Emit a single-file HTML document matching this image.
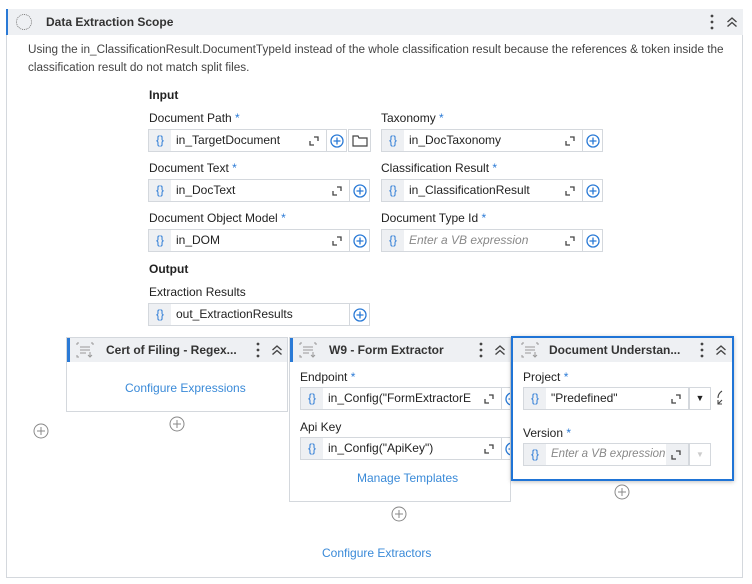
<!DOCTYPE html>
<html><head><meta charset="utf-8"><style>
*{box-sizing:border-box;margin:0;padding:0}
body{width:752px;height:584px;background:#fff;font-family:"Liberation Sans",sans-serif;font-size:12px;color:#222;position:relative;overflow:hidden}
.a{position:absolute}
.lbl{position:absolute;font-size:12px;color:#222;white-space:nowrap}
.lbl b{color:#2a7ad6;font-weight:normal}
.box{position:absolute;height:23px;border:1px solid #d4d8dd;background:#fff;display:flex;white-space:nowrap;overflow:hidden}
.br{width:22px;background:#eef0f3;color:#2a7ad6;text-align:center;line-height:21px;font-size:12px;flex:none}
.v{flex:1;line-height:21px;padding-left:5px;overflow:hidden;font-size:12px}
.v.ph{font-style:italic;color:#888}
.ex{width:22px;flex:none;position:relative}
.ex svg{position:absolute;left:5px;top:6px}
.pl{width:20px;flex:none;border-left:1px solid #d4d8dd;position:relative}
.pl svg{position:absolute;left:3px;top:4px}
.circ{position:absolute}
.card{position:absolute;border:1px solid #d4d8dd;background:#fff}
.hd{position:absolute;left:0;right:0;top:0;height:24px;background:#eef0f3;border-left:3px solid #2a7ad6}
.hd .t{position:absolute;left:36px;top:5px;font-weight:bold;font-size:12px;white-space:nowrap;color:#333}
.link{position:absolute;color:#3a8ad8;font-size:12px;white-space:nowrap}
</style></head><body>
<svg width="0" height="0" style="position:absolute">
<defs>
<symbol id="ex" viewBox="0 0 10 10"><path d="M1 5v4h4M5 1h4v4" fill="none" stroke="#444" stroke-width="1.3"/></symbol>
<symbol id="pl" viewBox="0 0 14 14"><circle cx="7" cy="7" r="6" fill="none" stroke="#2a7ad6" stroke-width="1.3"/><path d="M7 3.5v7M3.5 7h7" stroke="#2a7ad6" stroke-width="1.3"/></symbol>
<symbol id="gp" viewBox="0 0 16 16"><circle cx="8" cy="8" r="7" fill="#fff" stroke="#888" stroke-width="1"/><path d="M8 4v8M4 8h8" stroke="#888" stroke-width="1"/></symbol>
<symbol id="dots" viewBox="0 0 4 16"><circle cx="2" cy="2" r="1.4" fill="#444"/><circle cx="2" cy="8" r="1.4" fill="#444"/><circle cx="2" cy="14" r="1.4" fill="#444"/></symbol>
<symbol id="chev" viewBox="0 0 12 12"><path d="M1.5 6l4.5-4 4.5 4M1.5 10.5l4.5-4 4.5 4" fill="none" stroke="#444" stroke-width="1.4"/></symbol>
<symbol id="act" viewBox="0 0 18 16"><path d="M1 1h2M1 1v2M15 1h2M17 1v2M1 13v2h2M4 5h10M4 8h10M4 11h6M14 10v5M12 13l2 2 2-2" fill="none" stroke="#999" stroke-width="1"/></symbol>
</defs></svg>
<div class="a" style="left:6px;top:9px;width:737px;height:569px;border:1px solid #d4d8dd"></div>
<div class="a" style="left:6px;top:9px;width:737px;height:26px;background:#eef0f3;border-left:2px solid #2a7ad6"></div>
<div class="a" style="left:16px;top:14px;width:16px;height:16px;border:1.3px dotted #777;border-radius:50%"></div>
<div class="a" style="left:46px;top:15px;font-weight:bold;font-size:12px;color:#333">Data Extraction Scope</div>
<svg class="a" style="left:710px;top:14px" width="4" height="16"><use href="#dots"/></svg>
<svg class="a" style="left:726px;top:16px" width="12" height="12"><use href="#chev"/></svg>
<div class="a" style="left:28px;top:41px;width:714px;line-height:18px;color:#444;font-size:11.75px">Using the in_ClassificationResult.DocumentTypeId instead of the whole classification result because the references &amp; token inside the classification result do not match split files.</div>

<div class="lbl" style="left:149px;top:88px;font-weight:bold">Input</div>
<div class="lbl" style="left:149px;top:111px">Document Path <b>*</b></div>
<div class="box" style="left:148px;top:129px;width:199px"><div class="br">{}</div><div class="v">in_TargetDocument</div><div class="ex"><svg width="10" height="10"><use href="#ex"/></svg></div><div class="pl"><svg width="14" height="14"><use href="#pl"/></svg></div></div>
<div class="a" style="left:348px;top:129px;width:23px;height:23px;border:1px solid #d4d8dd"><svg class="a" style="left:3px;top:5px" width="16" height="12"><path d="M1 1h5l1 2h8v8H1z" fill="none" stroke="#444" stroke-width="1.2"/></svg></div>
<div class="lbl" style="left:381px;top:111px">Taxonomy <b>*</b></div>
<div class="box" style="left:381px;top:129px;width:222px"><div class="br">{}</div><div class="v">in_DocTaxonomy</div><div class="ex"><svg width="10" height="10"><use href="#ex"/></svg></div><div class="pl"><svg width="14" height="14"><use href="#pl"/></svg></div></div>

<div class="lbl" style="left:149px;top:161px">Document Text <b>*</b></div>
<div class="box" style="left:148px;top:179px;width:222px"><div class="br">{}</div><div class="v">in_DocText</div><div class="ex"><svg width="10" height="10"><use href="#ex"/></svg></div><div class="pl"><svg width="14" height="14"><use href="#pl"/></svg></div></div>
<div class="lbl" style="left:381px;top:161px">Classification Result <b>*</b></div>
<div class="box" style="left:381px;top:179px;width:222px"><div class="br">{}</div><div class="v">in_ClassificationResult</div><div class="ex"><svg width="10" height="10"><use href="#ex"/></svg></div><div class="pl"><svg width="14" height="14"><use href="#pl"/></svg></div></div>

<div class="lbl" style="left:149px;top:211px">Document Object Model <b>*</b></div>
<div class="box" style="left:148px;top:229px;width:222px"><div class="br">{}</div><div class="v">in_DOM</div><div class="ex"><svg width="10" height="10"><use href="#ex"/></svg></div><div class="pl"><svg width="14" height="14"><use href="#pl"/></svg></div></div>
<div class="lbl" style="left:381px;top:211px">Document Type Id <b>*</b></div>
<div class="box" style="left:381px;top:229px;width:222px"><div class="br">{}</div><div class="v ph">Enter a VB expression</div><div class="ex"><svg width="10" height="10"><use href="#ex"/></svg></div><div class="pl"><svg width="14" height="14"><use href="#pl"/></svg></div></div>

<div class="lbl" style="left:149px;top:262px;font-weight:bold">Output</div>
<div class="lbl" style="left:149px;top:285px">Extraction Results</div>
<div class="box" style="left:148px;top:303px;width:222px"><div class="br">{}</div><div class="v">out_ExtractionResults</div><div class="pl"><svg width="14" height="14"><use href="#pl"/></svg></div></div>

<!-- card 1 -->
<div class="card" style="left:66px;top:337px;width:222px;height:75px">
<div class="hd"><svg class="a" style="left:6px;top:4px" width="18" height="16"><use href="#act"/></svg><div class="t">Cert of Filing - Regex...</div><svg class="a" style="left:186px;top:4px" width="4" height="16"><use href="#dots"/></svg><svg class="a" style="left:201px;top:6px" width="12" height="12"><use href="#chev"/></svg></div>
<div class="link" style="left:58px;top:43px">Configure Expressions</div>
</div>
<!-- card 2 -->
<div class="card" style="left:289px;top:337px;width:222px;height:165px;overflow:hidden">
<div class="hd"><svg class="a" style="left:6px;top:4px" width="18" height="16"><use href="#act"/></svg><div class="t">W9 - Form Extractor</div><svg class="a" style="left:186px;top:4px" width="4" height="16"><use href="#dots"/></svg><svg class="a" style="left:201px;top:6px" width="12" height="12"><use href="#chev"/></svg></div>
<div class="lbl" style="left:10px;top:32px">Endpoint <b>*</b></div>
<div class="box" style="left:10px;top:49px;width:222px"><div class="br">{}</div><div class="v">in_Config("FormExtractorE</div><div class="ex"><svg width="10" height="10"><use href="#ex"/></svg></div><div class="pl"><svg width="14" height="14"><use href="#pl"/></svg></div></div>
<div class="lbl" style="left:10px;top:82px">Api Key</div>
<div class="box" style="left:10px;top:99px;width:222px"><div class="br">{}</div><div class="v">in_Config("ApiKey")</div><div class="ex"><svg width="10" height="10"><use href="#ex"/></svg></div><div class="pl"><svg width="14" height="14"><use href="#pl"/></svg></div></div>
<div class="link" style="left:67px;top:133px">Manage Templates</div>
</div>
<!-- card 3 -->
<div class="card" style="left:511px;top:336px;width:223px;height:145px;border:2px solid #1f74d6;box-shadow:0 1px 4px rgba(0,0,0,.25)">
<div class="hd" style="border-left:0"><svg class="a" style="left:8px;top:4px" width="18" height="16"><use href="#act"/></svg><div class="t">Document Understan...</div><svg class="a" style="left:187px;top:4px" width="4" height="16"><use href="#dots"/></svg><svg class="a" style="left:202px;top:6px" width="12" height="12"><use href="#chev"/></svg></div>
<div class="lbl" style="left:10px;top:32px">Project <b>*</b></div>
<div class="box" style="left:10px;top:49px;width:166px"><div class="br">{}</div><div class="v">"Predefined"</div><div class="ex"><svg width="10" height="10"><use href="#ex"/></svg></div></div>
<div class="a" style="left:176px;top:49px;width:22px;height:23px;border:1px solid #d4d8dd;text-align:center;font-size:9px;line-height:21px;color:#222">▼</div>
<svg class="a" style="left:202px;top:52px" width="10" height="16"><path d="M7 1C4 3 3 6 3 8M3 10v4h4M3 14l4-4" fill="none" stroke="#444" stroke-width="1.1"/></svg>
<div class="lbl" style="left:10px;top:88px">Version <b>*</b></div>
<div class="box" style="left:10px;top:105px;width:166px"><div class="br">{}</div><div class="v ph" style="font-size:11.5px">Enter a VB expression</div><div class="ex" style="background:#eef0f3"><svg width="10" height="10"><use href="#ex"/></svg></div></div>
<div class="a" style="left:176px;top:105px;width:22px;height:23px;border:1px solid #d4d8dd;text-align:center;font-size:8px;line-height:21px;color:#ccc">▼</div>
</div>

<svg class="circ" style="left:33px;top:423px" width="16" height="16"><use href="#gp"/></svg>
<svg class="circ" style="left:169px;top:416px" width="16" height="16"><use href="#gp"/></svg>
<svg class="circ" style="left:391px;top:506px" width="16" height="16"><use href="#gp"/></svg>
<svg class="circ" style="left:614px;top:484px" width="16" height="16"><use href="#gp"/></svg>
<div class="link" style="left:322px;top:546px">Configure Extractors</div>
</body></html>
